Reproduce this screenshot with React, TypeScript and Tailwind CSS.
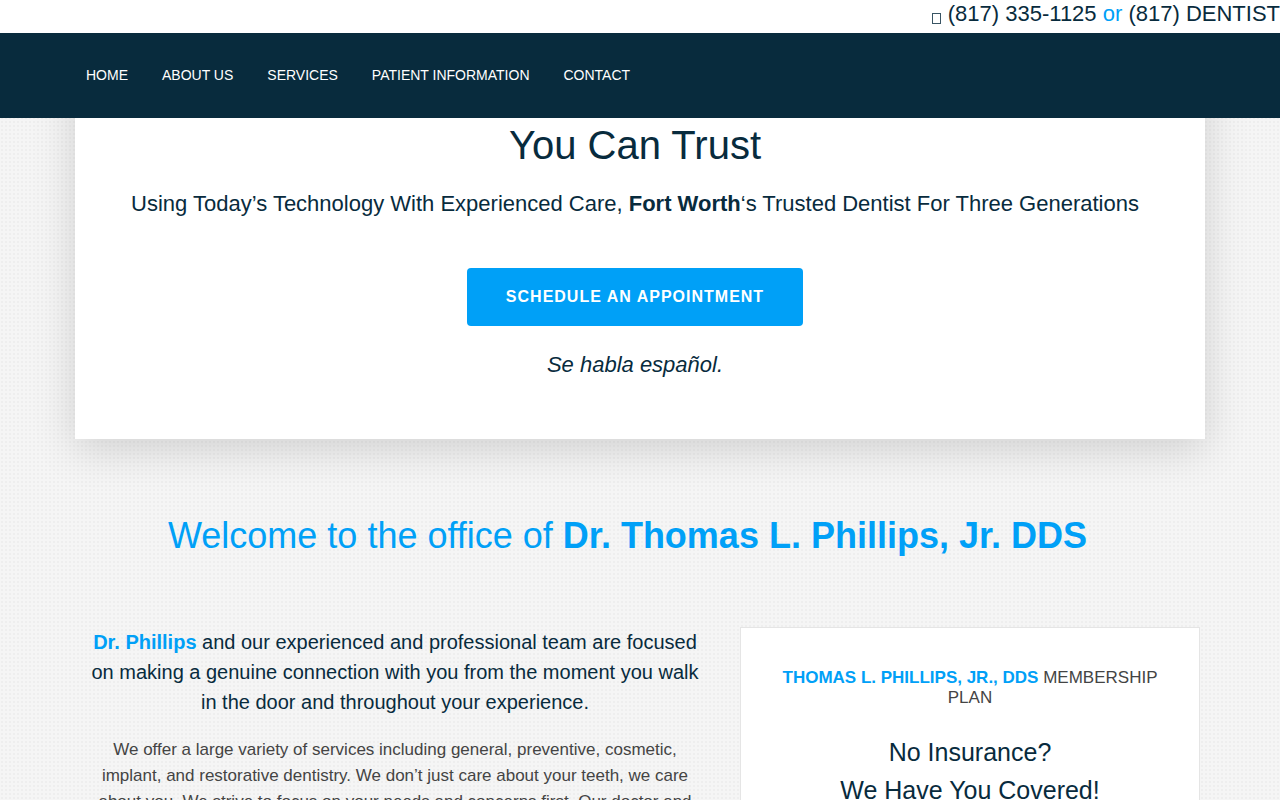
interface NavItem {
  label: string
  href: string
}

const NAV_ITEMS: NavItem[] = [
  { label: "HOME", href: "#home" },
  { label: "ABOUT US", href: "#about" },
  { label: "SERVICES", href: "#services" },
  { label: "PATIENT INFORMATION", href: "#patients" },
  { label: "CONTACT", href: "#contact" },
]

function TopBar() {
  return (
    <div className="flex h-[33px] items-start justify-end bg-white text-[22px] leading-7 text-[#082b3d]">
      <p className="whitespace-nowrap">
        <span aria-hidden="true" className="mr-[7px] inline-block h-[11px] w-[9px] translate-y-[3px] border border-[#082b3d]/80" />
        <a href="tel:8173351125">(817) 335-1125</a> <span className="text-[#00a0f7]">or</span>{" "}
        <a href="tel:8173368478">(817) DENTIST</a>
      </p>
    </div>
  )
}

function MainNav() {
  return (
    <header className="sticky top-0 z-10 bg-[#082b3d]">
      <nav className="mx-auto flex h-[85px] max-w-[1130px] items-center px-[11px] pb-0.5">
        <ul className="flex gap-[34px] text-sm text-white">
          {NAV_ITEMS.map((item) => (
            <li key={item.label}>
              <a href={item.href} className="hover:text-[#00a0f7]">
                {item.label}
              </a>
            </li>
          ))}
        </ul>
      </nav>
    </header>
  )
}

// The top of the panel tucks under the nav bar so its shadow runs straight down both sides
function Hero() {
  return (
    <section className="mx-auto -mt-12 max-w-[1130px] bg-white pt-[51px] pr-[10px] pb-[58px] text-center text-[#082b3d] shadow-[0_10px_40px_rgba(0,0,0,0.15)]">
      <h1 className="text-[40px] leading-[48px]">You Can Trust</h1>
      <p className="mt-[18px] text-[22px] leading-[33px]">
        Using Today’s Technology With Experienced Care, <strong>Fort Worth</strong>‘s Trusted Dentist For Three
        Generations
      </p>
      <button
        type="button"
        className="mt-12 h-[58px] rounded-[4px] bg-[#00a0f7] px-[39px] text-base font-bold tracking-[1px] text-white hover:bg-[#0090df]"
      >
        SCHEDULE AN APPOINTMENT
      </button>
      <p className="mt-[22px] text-[22px] leading-[33px] italic">Se habla español.</p>
    </section>
  )
}

function Intro() {
  return (
    <div className="flex-1 px-[10px] text-center">
      <h3 className="text-xl leading-[30px] text-[#082b3d]">
        <strong className="text-[#00a0f7]">Dr. Phillips</strong> and our experienced and professional team are focused on
        making a genuine connection with you from the moment you walk in the door and throughout your experience.
      </h3>
      <p className="mt-5 text-[17px] leading-[26px] text-[#444444]">
        We offer a large variety of services including general, preventive, cosmetic, implant, and restorative
        dentistry. We don’t just care about your teeth, we care about you. We strive to focus on your needs and concerns
        first. Our doctor and
      </p>
    </div>
  )
}

function MembershipCard() {
  return (
    <aside className="w-[460px] shrink-0 border border-[#e5e5e5] bg-white px-10 pt-10 text-center">
      <h4 className="text-[17px] leading-5 text-[#444444]">
        <strong className="text-[#00a0f7]">THOMAS L. PHILLIPS, JR., DDS</strong> MEMBERSHIP PLAN
      </h4>
      <p className="mt-[25px] text-[25px] leading-[38px] text-[#082b3d]">
        No Insurance?
        <br />
        We Have You Covered!
      </p>
    </aside>
  )
}

export default function App() {
  return (
    <div className="min-h-screen bg-[#f5f5f5] bg-[radial-gradient(circle_at_center,#eeeeee_1px,transparent_1px)] bg-[length:4px_4px] font-['Liberation_Sans',Arial,sans-serif]">
      <TopBar />
      <MainNav />
      <main>
        <Hero />
        <section className="mx-auto max-w-[1130px] px-[5px]">
          <h2 className="mt-[70px] pr-[25px] text-center text-4xl leading-[54px] text-[#00a0f7]">
            Welcome to the office of <strong>Dr. Thomas L. Phillips, Jr. DDS</strong>
          </h2>
          <div className="mt-16 flex gap-[30px]">
            <Intro />
            <MembershipCard />
          </div>
        </section>
      </main>
    </div>
  )
}
